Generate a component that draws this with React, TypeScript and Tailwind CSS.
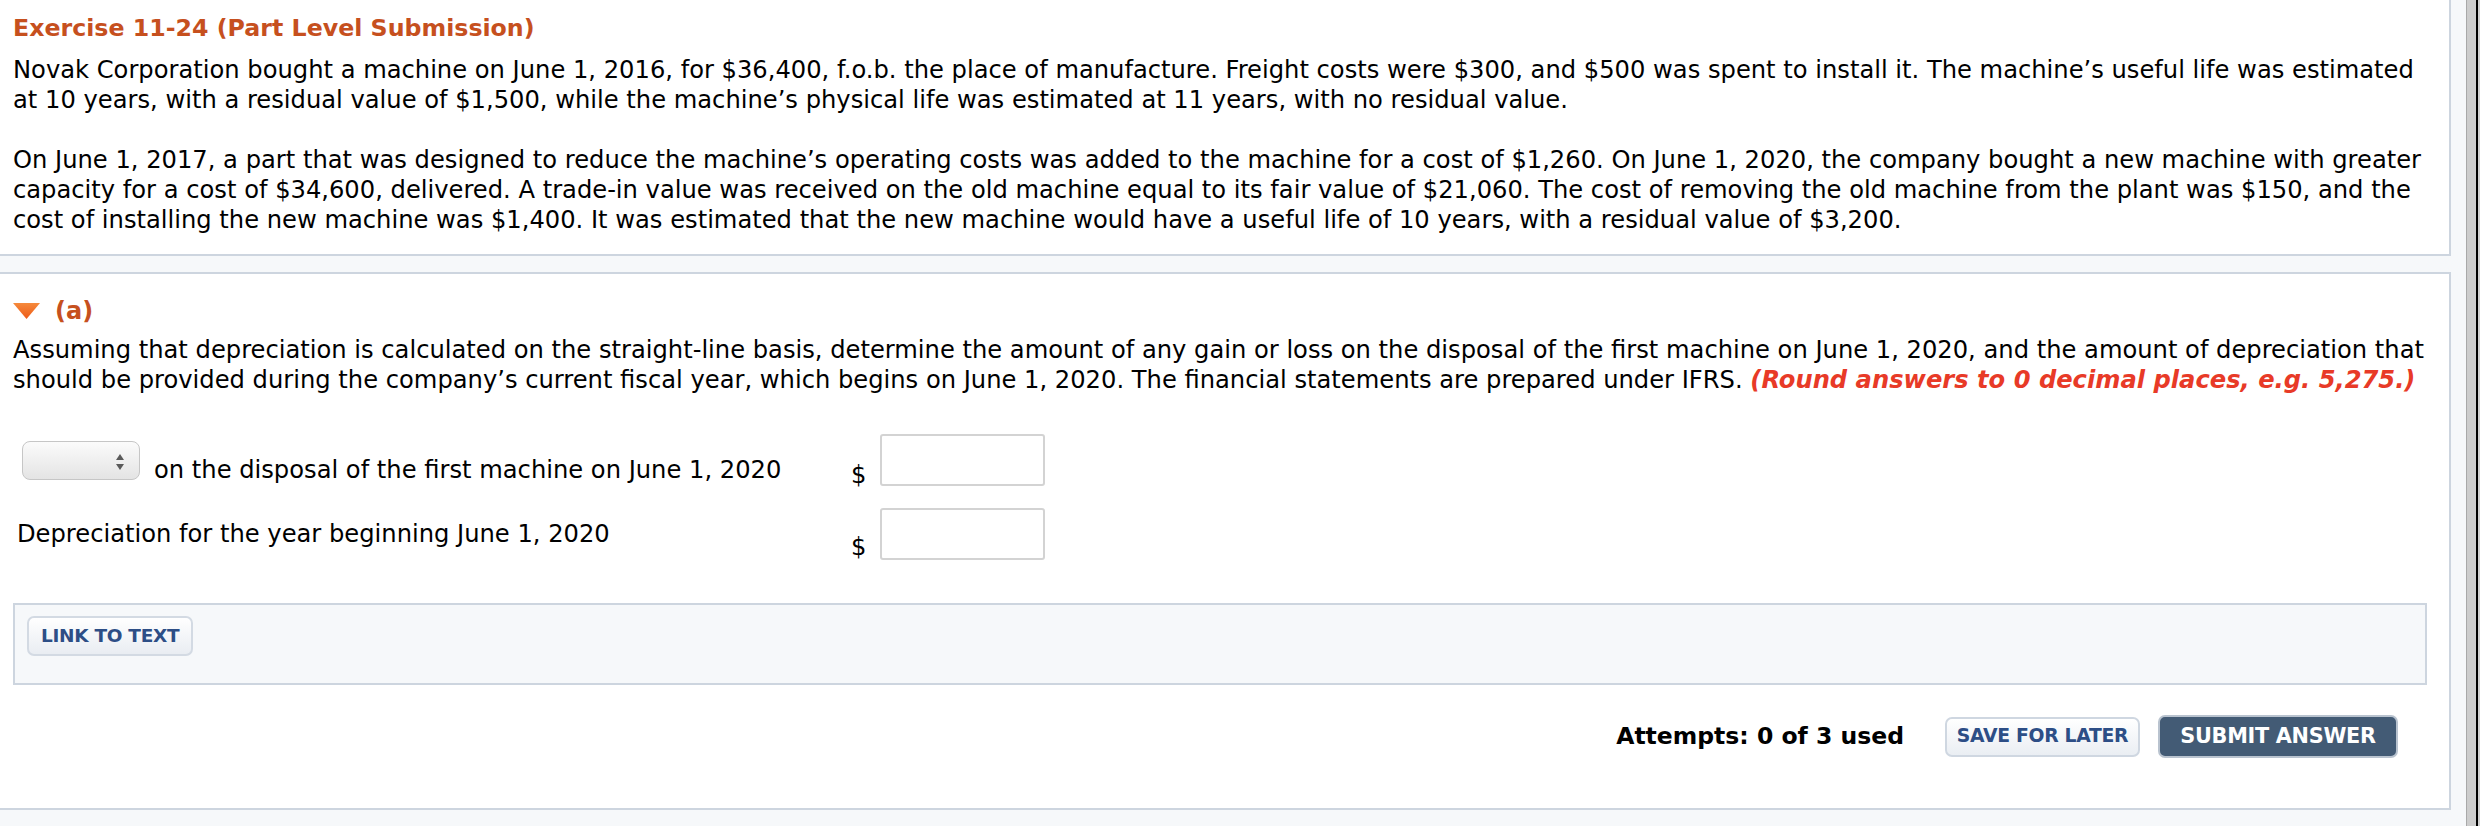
import React from "react";

const font = { fontFamily: '"DejaVu Sans", Verdana, sans-serif' };

function SelectBox() {
  return (
    <div className="relative w-[118px] h-[39px] rounded-[8px] border border-[#c6c6c6] bg-gradient-to-b from-[#fbfbfb] to-[#e4e4e4] shrink-0">
      <svg className="absolute right-[14px] top-[11px]" width="10" height="18" viewBox="0 0 10 18">
        <path d="M5 1 L9 7 L1 7 Z" fill="#5a5a5a" />
        <path d="M5 17 L9 11 L1 11 Z" fill="#5a5a5a" />
      </svg>
    </div>
  );
}

function AnswerInput() {
  return <div className="w-[165px] h-[52px] rounded-[3px] border-2 border-[#d3d3d3] bg-white shrink-0" />;
}

export default function App() {
  return (
    <div className="w-[2480px] h-[826px] bg-[#f6f8fa] flex overflow-hidden text-black" style={font}>
      <div className="w-[2466px] flex flex-col">
        {/* Panel 1 */}
        <div className="w-[2451px] bg-white border-r-2 border-b-2 border-[#cdd5df] pl-[13px] pt-[13px] pb-[19px]">
          <div className="text-[23.7px] leading-[30px] font-bold text-[#c6501e]">Exercise 11-24 (Part Level Submission)</div>
          <div className="mt-[12px] text-[24.2px] leading-[30px] whitespace-nowrap">
            <div>Novak Corporation bought a machine on June 1, 2016, for $36,400, f.o.b. the place of manufacture. Freight costs were $300, and $500 was spent to install it. The machine’s useful life was estimated</div>
            <div>at 10 years, with a residual value of $1,500, while the machine’s physical life was estimated at 11 years, with no residual value.</div>
          </div>
          <div className="mt-[30px] text-[24.2px] leading-[30px] whitespace-nowrap">
            <div>On June 1, 2017, a part that was designed to reduce the machine’s operating costs was added to the machine for a cost of $1,260. On June 1, 2020, the company bought a new machine with greater</div>
            <div>capacity for a cost of $34,600, delivered. A trade-in value was received on the old machine equal to its fair value of $21,060. The cost of removing the old machine from the plant was $150, and the</div>
            <div>cost of installing the new machine was $1,400. It was estimated that the new machine would have a useful life of 10 years, with a residual value of $3,200.</div>
          </div>
        </div>

        {/* Panel 2 */}
        <div className="mt-[16px] w-[2451px] bg-white border-t-2 border-r-2 border-b-2 border-[#cdd5df] pl-[13px] pr-[22px] pt-[22px] pb-[50px]">
          <div className="flex items-center h-[30px]">
            <svg width="27" height="16" viewBox="0 0 27 16" className="shrink-0">
              <defs>
                <linearGradient id="tri" x1="0" y1="0" x2="0" y2="1">
                  <stop offset="0" stopColor="#f58a3c" />
                  <stop offset="1" stopColor="#ee5a17" />
                </linearGradient>
              </defs>
              <path d="M0 0 L27 0 L13.5 16 Z" fill="url(#tri)" />
            </svg>
            <span className="ml-[15px] text-[24px] leading-[30px] font-bold text-[#c6501e]">(a)</span>
          </div>
          <div className="mt-[9px] text-[24.2px] leading-[30px] whitespace-nowrap">
            <div>Assuming that depreciation is calculated on the straight-line basis, determine the amount of any gain or loss on the disposal of the first machine on June 1, 2020, and the amount of depreciation that</div>
            <div>
              should be provided during the company’s current fiscal year, which begins on June 1, 2020. The financial statements are prepared under IFRS.{" "}
              <span className="font-bold italic text-[#e83a27]">(Round answers to 0 decimal places, e.g. 5,275.)</span>
            </div>
          </div>

          {/* Row 1 */}
          <div className="mt-[39px] flex items-center h-[52px] text-[24.2px] leading-[30px]">
            <div className="w-[838px] flex items-center pl-[9px]">
              <SelectBox />
              <span className="ml-[14px] whitespace-nowrap pt-[20px]">on the disposal of the first machine on June 1, 2020</span>
            </div>
            <span className="w-[29px] self-end leading-[22px]">$</span>
            <AnswerInput />
          </div>

          {/* Row 2 */}
          <div className="mt-[22px] flex items-center h-[52px] text-[24.2px] leading-[30px]">
            <div className="w-[838px] pl-[4px] whitespace-nowrap">Depreciation for the year beginning June 1, 2020</div>
            <span className="w-[29px] self-end leading-[26px]">$</span>
            <AnswerInput />
          </div>

          {/* Link box */}
          <div className="mt-[43px] h-[82px] border-2 border-[#cdd5df] bg-[#f6f8fa] pl-[12px] pt-[11px]">
            <button className="h-[40px] px-[12px] rounded-[7px] border-2 border-[#d3dae3] bg-gradient-to-b from-white to-[#e9edf2] text-[18.5px] font-bold text-[#2d4e86] tracking-[-0.3px]">
              LINK TO TEXT
            </button>
          </div>

          {/* Footer */}
          <div className="mt-[30px] flex items-center justify-end pr-[29px]">
            <span className="text-[23.5px] font-bold text-black mr-[41px]">Attempts: 0 of 3 used</span>
            <button className="h-[40px] w-[195px] rounded-[7px] border-2 border-[#cfd7e1] bg-gradient-to-b from-white to-[#eaeef3] text-[18.8px] font-bold text-[#2d4e86] tracking-[-0.3px]">
              SAVE FOR LATER
            </button>
            <button className="ml-[18px] h-[43px] w-[240px] rounded-[7px] border-2 border-[#b9c3cf] bg-[#435b75] text-[20.8px] font-bold text-white tracking-[-0.3px]">
              SUBMIT ANSWER
            </button>
          </div>
        </div>
      </div>
      {/* right frame strip */}
      <div className="w-[14px] flex">
        <div className="w-[1px] bg-[#a9a9a9]" />
        <div className="w-[9px] bg-[#cdcdcd]" />
        <div className="w-[2px] bg-black" />
        <div className="w-[2px] bg-[#d0d0d0]" />
      </div>
    </div>
  );
}
